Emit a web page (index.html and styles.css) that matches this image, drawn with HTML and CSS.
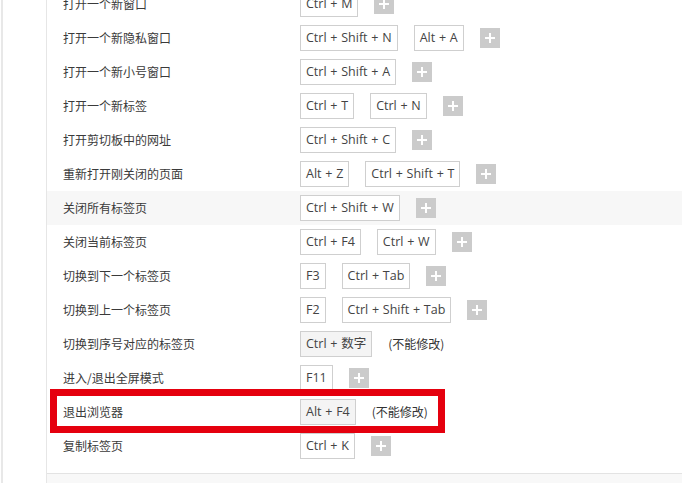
FILE: index.html
```html
<!DOCTYPE html>
<html lang="zh-CN">
<head>
<meta charset="utf-8">
<title>快捷键</title>
<link rel="stylesheet" href="styles.css">
</head>
<body>
<div class="app">
  <div class="rail"><div class="stripe"></div></div>
  <div class="panel">
    <ul class="list">
      <li class="row"><span class="label">打开一个新窗口</span><span class="keys"><span class="key">Ctrl + M</span><span class="add"></span></span></li>
      <li class="row"><span class="label">打开一个新隐私窗口</span><span class="keys"><span class="key">Ctrl + Shift + N</span><span class="key">Alt + A</span><span class="add"></span></span></li>
      <li class="row"><span class="label">打开一个新小号窗口</span><span class="keys"><span class="key">Ctrl + Shift + A</span><span class="add"></span></span></li>
      <li class="row"><span class="label">打开一个新标签</span><span class="keys"><span class="key">Ctrl + T</span><span class="key">Ctrl + N</span><span class="add"></span></span></li>
      <li class="row"><span class="label">打开剪切板中的网址</span><span class="keys"><span class="key">Ctrl + Shift + C</span><span class="add"></span></span></li>
      <li class="row"><span class="label">重新打开刚关闭的页面</span><span class="keys"><span class="key">Alt + Z</span><span class="key">Ctrl + Shift + T</span><span class="add"></span></span></li>
      <li class="row hover"><span class="label">关闭所有标签页</span><span class="keys"><span class="key">Ctrl + Shift + W</span><span class="add"></span></span></li>
      <li class="row"><span class="label">关闭当前标签页</span><span class="keys"><span class="key">Ctrl + F4</span><span class="key">Ctrl + W</span><span class="add"></span></span></li>
      <li class="row"><span class="label">切换到下一个标签页</span><span class="keys"><span class="key">F3</span><span class="key">Ctrl + Tab</span><span class="add"></span></span></li>
      <li class="row"><span class="label">切换到上一个标签页</span><span class="keys"><span class="key">F2</span><span class="key">Ctrl + Shift + Tab</span><span class="add"></span></span></li>
      <li class="row"><span class="label">切换到序号对应的标签页</span><span class="keys"><span class="key fixed">Ctrl + 数字</span><span class="note">(不能修改)</span></span></li>
      <li class="row"><span class="label">进入/退出全屏模式</span><span class="keys"><span class="key">F11</span><span class="add"></span></span></li>
      <li class="row"><span class="label">退出浏览器</span><span class="keys"><span class="key fixed">Alt + F4</span><span class="note">(不能修改)</span></span></li>
      <li class="row"><span class="label">复制标签页</span><span class="keys"><span class="key">Ctrl + K</span><span class="add"></span></span></li>
    </ul>
    <div class="footer"></div>
  </div>
</div>
<div class="highlight"></div>
</body>
</html>
```

FILE: styles.css
```css
html, body {
  margin: 0;
  padding: 0;
  background: #fff;
  height: 100%;
  overflow: hidden;
}
body {
  font-family: "Microsoft YaHei", "Noto Sans CJK SC", sans-serif;
  color: #333;
  position: relative;
}
.app {
  display: flex;
  min-height: 100%;
}
.rail {
  width: 46px;
  flex: none;
  display: flex;
}
.stripe {
  width: 2px;
  margin-left: 1px;
  background: #e8e8e8;
}
.panel {
  flex: 1;
  border-left: 1px solid #e6e6e6;
  margin-top: -13px;
  display: flex;
  flex-direction: column;
}
.list {
  list-style: none;
  margin: 0;
  padding: 0 0 10px 0;
  border-bottom: 1px solid #e3e3e3;
}
.row {
  height: 34px;
  box-sizing: border-box;
  padding-bottom: 1px;
  display: flex;
  align-items: center;
  padding-left: 16px;
}
.row.hover {
  background: #f7f7f7;
}
.label {
  width: 237px;
  flex: none;
  font-size: 12px;
  line-height: 16px;
  color: #3a3a3a;
}
.keys {
  display: flex;
  align-items: center;
  gap: 16px;
}
.key {
  height: 24px;
  line-height: 24px;
  padding: 0 5px;
  border: 1px solid #cfcfcf;
  background: #fff;
  font-family: "Open Sans", "Noto Sans CJK SC", sans-serif;
  font-size: 12.5px;
  word-spacing: 0.5px;
  color: #444;
  white-space: nowrap;
}
.key.fixed {
  background: #f4f4f4;
}
.note {
  font-size: 12px;
  line-height: 16px;
  color: #333;
}
.add {
  width: 20px;
  height: 20px;
  background: #cbcbcb;
  position: relative;
  margin-top: 1px;
}
.add::before, .add::after {
  content: "";
  position: absolute;
  background: #fff;
  left: 50%;
  top: 50%;
  transform: translate(-50%, -50%);
}
.add::before {
  width: 10px;
  height: 2px;
}
.add::after {
  width: 2px;
  height: 10px;
}
.footer {
  flex: 1;
  background: #f8f8f8;
}
.highlight {
  position: absolute;
  left: 50px;
  top: 389px;
  width: 395px;
  height: 44px;
  box-sizing: border-box;
  border: 7px solid #e5000e;
}
```
